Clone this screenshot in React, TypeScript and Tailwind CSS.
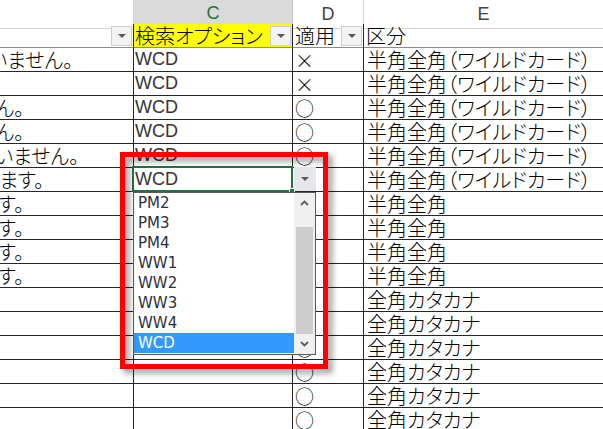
import React from "react";

type Row = {
  a: string;
  aw: string;
  c: string;
  d: string;
  e: string;
};

const WILD = "半角全角（ワイルドカード）";

const rows: Row[] = [
  { a: "いません。", aw: "w-[73px]", c: "WCD", d: "×", e: WILD },
  { a: "", aw: "w-[0px]", c: "WCD", d: "×", e: WILD },
  { a: "ん。", aw: "w-[24px]", c: "WCD", d: "○", e: WILD },
  { a: "ん。", aw: "w-[24px]", c: "WCD", d: "○", e: WILD },
  { a: "思いません。", aw: "w-[79px]", c: "WCD", d: "○", e: WILD },
  { a: "ます。", aw: "w-[44px]", c: "WCD", d: "○", e: WILD },
  { a: "す。", aw: "w-[24px]", c: "", d: "○", e: "半角全角" },
  { a: "す。", aw: "w-[24px]", c: "", d: "○", e: "半角全角" },
  { a: "す。", aw: "w-[24px]", c: "", d: "○", e: "半角全角" },
  { a: "す。", aw: "w-[24px]", c: "", d: "○", e: "半角全角" },
  { a: "", aw: "w-[0px]", c: "", d: "○", e: "全角カタカナ" },
  { a: "", aw: "w-[0px]", c: "", d: "○", e: "全角カタカナ" },
  { a: "", aw: "w-[0px]", c: "", d: "○", e: "全角カタカナ" },
  { a: "", aw: "w-[0px]", c: "", d: "○", e: "全角カタカナ" },
  { a: "", aw: "w-[0px]", c: "", d: "○", e: "全角カタカナ" },
  { a: "", aw: "w-[0px]", c: "", d: "○", e: "全角カタカナ" },
];

const options = ["PM2", "PM3", "PM4", "WW1", "WW2", "WW3", "WW4", "WCD"];

const jpBase =
  "font-['Noto_Sans_CJK_JP',sans-serif] [font-feature-settings:'palt'] font-light leading-[23px] text-black";
const jp = `${jpBase} text-[20px]`;

const cols = "grid grid-cols-[134px_159px_71px_250px]";

function FilterButton() {
  return (
    <div className="flex h-[20px] w-[21px] shrink-0 items-center justify-center border border-[#cfcfcf] bg-[#f3f3f3]">
      <svg width="8" height="4" viewBox="0 0 8 4">
        <path d="M0 0h8L4 4z" fill="#595959" />
      </svg>
    </div>
  );
}

function Chevron({ up }: { up?: boolean }) {
  return (
    <svg width="9" height="6" viewBox="0 0 9 6">
      <path
        d={up ? "M1 5L4.5 1.5L8 5" : "M1 1L4.5 4.5L8 1"}
        fill="none"
        stroke="#5c5c5c"
        strokeWidth="1.8"
      />
    </svg>
  );
}

function DropdownList() {
  return (
    <div className="absolute left-[133px] top-[192px] flex h-[163px] w-[183px] border border-[#5a5a5a] bg-white">
      <div className="flex flex-1 flex-col">
        {options.map((opt) => (
          <div
            key={opt}
            className={`flex h-[20px] items-center pl-[4px] font-['DejaVu_Sans',sans-serif] text-[15px] ${
              opt === "WCD" ? "bg-[#3399ff] text-white" : "text-[#2e2e3a]"
            }`}
          >
            {opt}
          </div>
        ))}
      </div>
      <div className="flex w-[21px] flex-col bg-[#f0f0f0]">
        <div className="flex h-[20px] items-center justify-center">
          <Chevron up />
        </div>
        <div className="flex flex-1 flex-col pt-[14px]">
          <div className="mx-[2px] flex-1 bg-[#cdcdcd]" />
        </div>
        <div className="flex h-[20px] items-center justify-center">
          <Chevron />
        </div>
      </div>
    </div>
  );
}

export default function App() {
  return (
    <div className="h-[429px] w-[603px] overflow-hidden bg-white">
      <div className="relative">
        {/* column letters */}
        <div className={`${cols} h-[24px]`}>
          <div className="border-b border-r border-[#d4d4d4] bg-white" />
          <div className="flex items-center justify-center border-b-2 border-r border-b-[#217346] border-r-[#c6c6c6] bg-[#dadada] font-['Liberation_Sans',sans-serif] text-[18px] text-[#217346]">
            C
          </div>
          <div className="flex items-center justify-center border-b border-r border-[#d4d4d4] bg-white font-['Liberation_Sans',sans-serif] text-[18px] text-[#444]">
            D
          </div>
          <div className="flex items-center justify-center border-b border-r border-[#d4d4d4] bg-white pr-[10px] font-['Liberation_Sans',sans-serif] text-[18px] text-[#444]">
            E
          </div>
        </div>

        {/* table header row */}
        <div className={`${cols} h-[24px]`}>
          <div className="flex items-center justify-end border-b border-r border-b-[#8c8c8c] border-r-[#262626] pr-[1px]">
            <FilterButton />
          </div>
          <div className="flex items-center justify-between border-b border-r border-b-[#8c8c8c] border-r-[#262626] bg-[#ffff00] pl-[1px] pr-[1px]">
            <span className={jp}>検索オプション</span>
            <FilterButton />
          </div>
          <div className="flex items-center justify-between border-b border-r border-b-[#8c8c8c] border-r-[#262626] pl-[2px] pr-[1px]">
            <span className={jp}>適用</span>
            <FilterButton />
          </div>
          <div className="flex items-center border-b border-r border-b-[#8c8c8c] border-r-[#262626] pl-[2px]">
            <span className={jp}>区分</span>
          </div>
        </div>

        {/* data rows */}
        {rows.map((r, i) => (
          <div key={i} className={`${cols} h-[24px]`}>
            <div className="flex overflow-hidden border-b border-r border-[#262626]">
              <div className={`flex shrink-0 justify-end whitespace-nowrap ${r.aw}`}>
                <span className={jp}>{r.a}</span>
              </div>
            </div>
            <div className="flex items-center border-b border-r border-[#262626] pl-[1px]">
              <span className="font-['Liberation_Sans',sans-serif] text-[18px] leading-[23px] text-[#333]">
                {r.c}
              </span>
            </div>
            <div className="flex items-center border-b border-r border-[#262626] pl-[2px]">
              <span className={`${jpBase} text-[19px]`}>{r.d}</span>
            </div>
            <div className="flex items-center whitespace-nowrap border-b border-r border-[#262626] pl-[3px]">
              <span className={jp}>{r.e}</span>
            </div>
          </div>
        ))}

        {/* active cell C6 */}
        <div className="absolute left-[132px] top-[166px] h-[26px] w-[161px] border-2 border-[#217346]" />
        <div className="absolute left-[289px] top-[188px] h-[6px] w-[6px] border border-white bg-[#217346]" />

        {/* validation dropdown button */}
        <div className="absolute left-[294px] top-[167px] flex h-[24px] w-[22px] items-center justify-center bg-[#e6e6ea]">
          <svg width="8" height="4" viewBox="0 0 8 4">
            <path d="M0 0h8L4 4z" fill="#5a5a5a" />
          </svg>
        </div>

        <DropdownList />

        {/* red annotation frame */}
        <div className="absolute left-[120px] top-[152px] h-[217px] w-[208px] border-[5px] border-[#ff0000] [filter:drop-shadow(4px_4px_3px_rgba(0,0,0,0.45))]" />
      </div>
    </div>
  );
}
